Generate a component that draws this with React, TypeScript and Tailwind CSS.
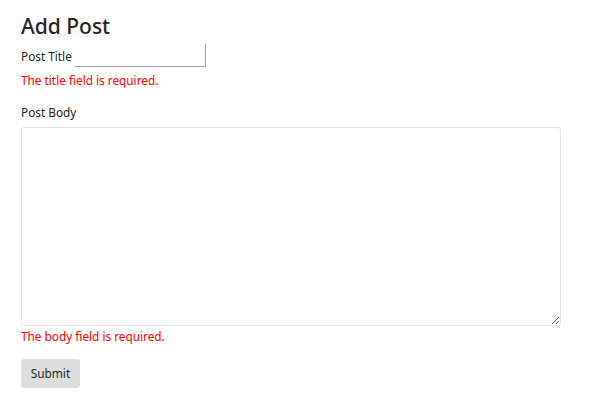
export default function App() {
  return (
    <div className="min-h-screen bg-white pl-[21px] pr-[31px] pt-[8px] text-[#212529]" style={{ fontFamily: '"Segoe UI", "Noto Sans", sans-serif' }}>
      <h1 className="text-[21px] font-medium leading-[36px]">Add Post</h1>
      <div className="flex items-end text-[11.8px]">
        <label className="leading-[20px] pb-[1px]">Post Title</label>
        <input
          type="text"
          className="ml-[3px] h-[23px] w-[131px] border-r border-b border-r-[#a0a0a0] border-b-[#a0a0a0] border-t-white border-l-white outline-none"
        />
      </div>
      <div className="mt-[3px] text-[11.8px] leading-[20px] text-[#ff0000]">The title field is required.</div>
      <div className="mt-[12px] text-[11.8px] leading-[20px]">Post Body</div>
      <textarea className="mt-[5px] block h-[199px] w-[540px] rounded-[3px] border border-[#e3e4e8] outline-none" />
      <div className="mt-0 text-[11.8px] leading-[20px] text-[#ff0000]">The body field is required.</div>
      <button className="mt-[13px] h-[29px] w-[59px] rounded-[3px] bg-[#dddddd] text-[11.8px] text-[#212529]">
        Submit
      </button>
    </div>
  );
}
